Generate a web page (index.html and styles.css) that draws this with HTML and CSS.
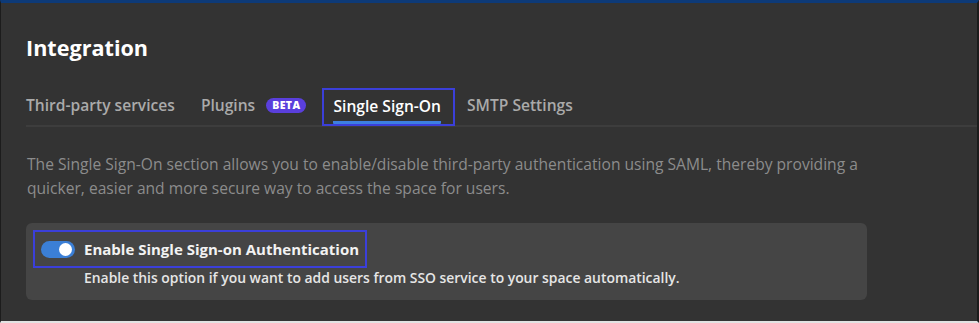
FILE: index.html
```html
<!DOCTYPE html>
<html lang="en">
<head>
  <meta charset="UTF-8">
  <meta name="viewport" content="width=device-width, initial-scale=1.0">
  <title>Integration</title>
  <link rel="stylesheet" href="styles.css">
</head>
<body>

<div class="frame">
  <h2 class="title">Integration</h2>

  <div class="tabs">
    <div class="tab">Third-party services</div>
    <div class="tab">Plugins <span class="badge">BETA</span></div>
    <div class="tab-mark">
      <div class="tab active">Single Sign-On</div>
    </div>
    <div class="tab">SMTP Settings</div>
  </div>

  <p class="intro">The Single Sign-On section allows you to enable/disable third-party authentication using SAML, thereby providing a quicker, easier and more secure way to access the space for users.</p>

  <div class="card">
    <div class="option-mark">
      <span class="toggle"><span class="knob"></span></span>
      <span class="option-title">Enable Single Sign-on Authentication</span>
    </div>
    <div class="option-desc">Enable this option if you want to add users from SSO service to your space automatically.</div>
  </div>
</div>

</body>
</html>
```

FILE: styles.css
```css
html, body {
  margin: 0;
  padding: 0;
  background-color: #333;
}
body {
  font-family: "Open Sans", "Noto Sans", Arial, sans-serif;
}
.frame {
  height: 323px;
  box-sizing: border-box;
  background-color: #333;
  border-top: 3px solid #0d3a78;
  border-left: 1px solid #1c1c1c;
  border-right: 2px solid #1c1c1c;
  border-bottom: 2px solid #e2e2e2;
  padding: 32px 0 0 25px;
  overflow: hidden;
}
.title {
  margin: 0;
  color: #fff;
  font-size: 21.6px;
  font-weight: 700;
  line-height: 26px;
}
.tabs {
  display: flex;
  align-items: center;
  gap: 26px;
  margin-top: 24px;
  height: 40px;
  border-bottom: 2px solid #3d3d3d;
}
.tab {
  color: #aaa;
  font-size: 15.6px;
  font-weight: 600;
  display: flex;
  align-items: center;
  gap: 11px;
}
.badge {
  background-color: #5a3fdc;
  color: #fff;
  font-size: 10.5px;
  font-weight: 800;
  letter-spacing: 0.4px;
  padding: 1px 6px;
  border-radius: 8px;
  line-height: 13px;
}
.tab-mark {
  border: 2px solid #3b3fd9;
  height: 34px;
  padding: 0 12px 0 9px;
  margin-top: 4px;
  margin-left: -10px;
  margin-right: -14px;
  display: flex;
  align-items: center;
}
.tab.active {
  color: #fff;
  height: 34px;
  box-sizing: border-box;
  padding-top: 1px;
  border-bottom: 3px solid #3d7fe0;
  border-radius: 1px;
}
.intro {
  margin: 25px 0 0 1px;
  width: 850px;
  color: #8c8c8c;
  font-size: 15.6px;
  line-height: 24px;
}
.card {
  margin-top: 23px;
  width: 841px;
  height: 77px;
  box-sizing: border-box;
  background-color: #454545;
  border-radius: 6px;
  padding: 7px 0 0 7px;
}
.option-mark {
  display: inline-flex;
  align-items: center;
  border: 2px solid #3b3fd9;
  width: 334px;
  height: 38px;
  box-sizing: border-box;
  padding-left: 6px;
  gap: 9px;
}
.toggle {
  width: 34px;
  height: 17px;
  border-radius: 9px;
  background-color: #3b7fd6;
  position: relative;
  flex-shrink: 0;
}
.knob {
  position: absolute;
  right: 3px;
  top: 2px;
  width: 13px;
  height: 13px;
  border-radius: 50%;
  background-color: #fff;
}
.option-title {
  color: #f2f2f2;
  font-size: 15px;
  font-weight: 700;
}
.option-desc {
  margin: 0 0 0 51px;
  color: #e6e6e6;
  font-size: 13.9px;
  font-weight: 600;
  line-height: 20px;
}
```
